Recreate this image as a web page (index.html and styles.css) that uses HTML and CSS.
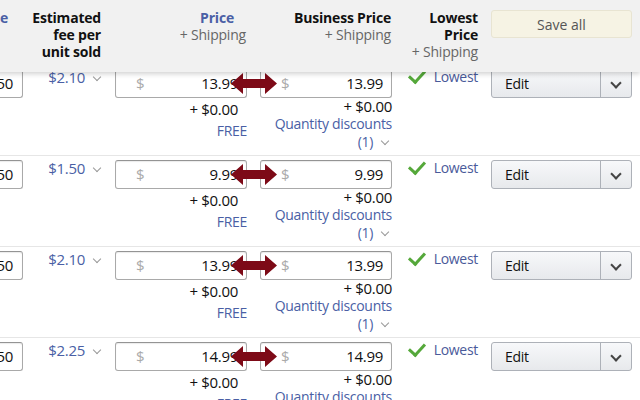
FILE: index.html
```html
<!DOCTYPE html>
<html lang="en">

<head>
    <meta charset="UTF-8">
    <meta name="viewport" content="width=device-width, initial-scale=1.0">
    <title>Manage Inventory - Pricing</title>
    <link rel="stylesheet" href="styles.css">
</head>

<body>
    <!-- Column headings -->
    <div class="head grid">
        <div class="h-qty">Sale</div>
        <div class="h-fee">Estimated<br>fee per<br>unit sold</div>
        <div class="h-price"><span class="link">Price</span><span class="sub">+ Shipping</span></div>
        <div class="h-biz"><span>Business Price</span><span class="sub">+ Shipping</span></div>
        <div class="h-low"><span>Lowest</span><span>Price</span><span class="sub">+ Shipping</span></div>
        <div class="h-act"><button class="save">Save all</button></div>
    </div>

    <!-- Offer rows -->
    <div class="rows">
        <div class="row grid">
            <div class="qty"><div class="box">50</div></div>
            <div class="fee"><span>$2.10</span><i class="chev"></i></div>
            <div class="price">
                <div class="box money"><span class="cur">$</span><span>13.99</span></div>
                <div class="ship">+ $0.00</div>
                <div class="free">FREE</div>
            </div>
            <div class="biz">
                <svg class="arrow" viewBox="0 0 46 21"><polygon points="0,10.5 12,0 12,6 34,6 34,0 46,10.5 34,21 34,15 12,15 12,21"/></svg>
                <div class="box money"><span class="cur">$</span><span>13.99</span></div>
                <div class="ship">+ $0.00</div>
                <div class="disc">Quantity discounts</div>
                <div class="disc">(1)<i class="chev"></i></div>
            </div>
            <div class="low"><span class="tick"></span><span>Lowest</span></div>
            <div class="act"><div class="edit"><span>Edit</span><span class="drop"><i class="chev dark"></i></span></div></div>
        </div>

        <div class="row grid">
            <div class="qty"><div class="box">50</div></div>
            <div class="fee"><span>$1.50</span><i class="chev"></i></div>
            <div class="price">
                <div class="box money"><span class="cur">$</span><span>9.99</span></div>
                <div class="ship">+ $0.00</div>
                <div class="free">FREE</div>
            </div>
            <div class="biz">
                <svg class="arrow" viewBox="0 0 46 21"><polygon points="0,10.5 12,0 12,6 34,6 34,0 46,10.5 34,21 34,15 12,15 12,21"/></svg>
                <div class="box money"><span class="cur">$</span><span>9.99</span></div>
                <div class="ship">+ $0.00</div>
                <div class="disc">Quantity discounts</div>
                <div class="disc">(1)<i class="chev"></i></div>
            </div>
            <div class="low"><span class="tick"></span><span>Lowest</span></div>
            <div class="act"><div class="edit"><span>Edit</span><span class="drop"><i class="chev dark"></i></span></div></div>
        </div>

        <div class="row grid">
            <div class="qty"><div class="box">50</div></div>
            <div class="fee"><span>$2.10</span><i class="chev"></i></div>
            <div class="price">
                <div class="box money"><span class="cur">$</span><span>13.99</span></div>
                <div class="ship">+ $0.00</div>
                <div class="free">FREE</div>
            </div>
            <div class="biz">
                <svg class="arrow" viewBox="0 0 46 21"><polygon points="0,10.5 12,0 12,6 34,6 34,0 46,10.5 34,21 34,15 12,15 12,21"/></svg>
                <div class="box money"><span class="cur">$</span><span>13.99</span></div>
                <div class="ship">+ $0.00</div>
                <div class="disc">Quantity discounts</div>
                <div class="disc">(1)<i class="chev"></i></div>
            </div>
            <div class="low"><span class="tick"></span><span>Lowest</span></div>
            <div class="act"><div class="edit"><span>Edit</span><span class="drop"><i class="chev dark"></i></span></div></div>
        </div>

        <div class="row grid">
            <div class="qty"><div class="box">50</div></div>
            <div class="fee"><span>$2.25</span><i class="chev"></i></div>
            <div class="price">
                <div class="box money"><span class="cur">$</span><span>14.99</span></div>
                <div class="ship">+ $0.00</div>
                <div class="free">FREE</div>
            </div>
            <div class="biz">
                <svg class="arrow" viewBox="0 0 46 21"><polygon points="0,10.5 12,0 12,6 34,6 34,0 46,10.5 34,21 34,15 12,15 12,21"/></svg>
                <div class="box money"><span class="cur">$</span><span>14.99</span></div>
                <div class="ship">+ $0.00</div>
                <div class="disc">Quantity discounts</div>
                <div class="disc">(1)<i class="chev"></i></div>
            </div>
            <div class="low"><span class="tick"></span><span>Lowest</span></div>
            <div class="act"><div class="edit"><span>Edit</span><span class="drop"><i class="chev dark"></i></span></div></div>
        </div>
    </div>
</body>

</html>
```

FILE: styles.css
```css
body {
    font-family: "Open Sans", Arial, sans-serif;
    font-size: 14px;
    color: #111;
    background-color: #fff;
    margin: 0;
    height: 100vh;
    overflow: hidden;
}

.grid {
    display: grid;
    grid-template-columns: 63px 92px 132px 145px 99px 141px;
    margin-left: -40px;
}

/* header */
.head {
    position: relative;
    z-index: 2;
    height: 72px;
    background-color: #f1f1f1;
    box-shadow: 0px 2px 5px rgba(0, 0, 0, 0.18);
    font-weight: bold;
    line-height: 17px;
    letter-spacing: -0.2px;
}

.head > div {
    padding-top: 9px;
    text-align: right;
    display: flex;
    flex-direction: column;
    align-items: flex-end;
}

.head .sub {
    font-weight: normal;
    color: #666;
}

.h-qty {
    color: #4a5fa5;
    padding-right: 15px;
}

.h-fee {
    padding-right: 14px;
}

.h-price {
    padding-right: 1px;
}

.h-price .link {
    color: #4a5fa5;
    margin-right: 12px;
}

.h-biz {
    padding-right: 1px;
}

.h-low {
    padding-right: 13px;
}

.head .h-act {
    padding-top: 10px;
}

.save {
    width: 141px;
    height: 28px;
    font-family: inherit;
    font-size: 14px;
    color: #555;
    background-color: #f6f3e4;
    border: 1px solid #e8e4d2;
    border-radius: 3px;
}

/* rows */
.rows {
    margin-top: -8px;
}

.row {
    height: 91px;
    box-sizing: border-box;
    border-top: 1px solid #e6e6e6;
    padding-top: 4px;
    letter-spacing: -0.3px;
}

.box {
    height: 29px;
    box-sizing: border-box;
    border: 1px solid #a9a9a9;
    border-top-color: #949494;
    border-radius: 3px;
    box-shadow: inset 0px 1px 1px rgba(0, 0, 0, 0.08);
    background-color: #fff;
    font-size: 15px;
    line-height: 27px;
    text-align: right;
    padding-right: 9px;
}

.money {
    display: flex;
    justify-content: space-between;
    padding-left: 20px;
    padding-right: 8px;
}

.cur {
    color: #aaa;
}

.chev {
    display: inline-block;
    width: 5px;
    height: 5px;
    border-right: 1px solid #999;
    border-bottom: 1px solid #999;
    transform: rotate(45deg);
    margin: 0 3px 4px 9px;
    vertical-align: middle;
}

.chev.dark {
    width: 6px;
    height: 6px;
    border-right: 2px solid #444;
    border-bottom: 2px solid #444;
    margin: 0 0 4px 0;
}

.fee {
    color: #4a5fa5;
    font-size: 15px;
    text-align: right;
    padding-right: 12px;
    line-height: 16px;
}

.price,
.biz {
    text-align: right;
    line-height: 18px;
}

.biz {
    position: relative;
    padding-left: 13px;
}

.price .ship {
    margin-top: 2px;
    padding-right: 9px;
    font-size: 15px;
}

.free {
    margin-top: 4px;
    color: #4a5fa5;
}

.biz .ship {
    font-size: 15px;
    line-height: 17px;
}

.disc {
    color: #4a5fa5;
}

.disc .chev {
    margin-right: 4px;
}

/* annotation arrow across both price inputs */
.arrow {
    position: absolute;
    left: -16px;
    top: 4px;
    width: 46px;
    height: 21px;
    fill: #7d0a17;
}

.low {
    display: flex;
    justify-content: flex-end;
    align-items: flex-start;
    padding-right: 13px;
    line-height: 16px;
    color: #4a5a9a;
}

.tick {
    width: 13px;
    height: 7px;
    border-left: 3px solid #55a83a;
    border-bottom: 3px solid #55a83a;
    transform: rotate(-48deg);
    margin: 1px 9px 0 0;
}

.edit {
    display: flex;
    height: 29px;
    box-sizing: border-box;
    border: 1px solid #adb1b8;
    border-radius: 3px;
    background: linear-gradient(#f7f8fa, #e7e9ec);
    line-height: 27px;
}

.edit > span:first-child {
    flex: 1;
    padding-left: 13px;
}

.drop {
    width: 30px;
    border-left: 1px solid #adb1b8;
    text-align: center;
}
```
